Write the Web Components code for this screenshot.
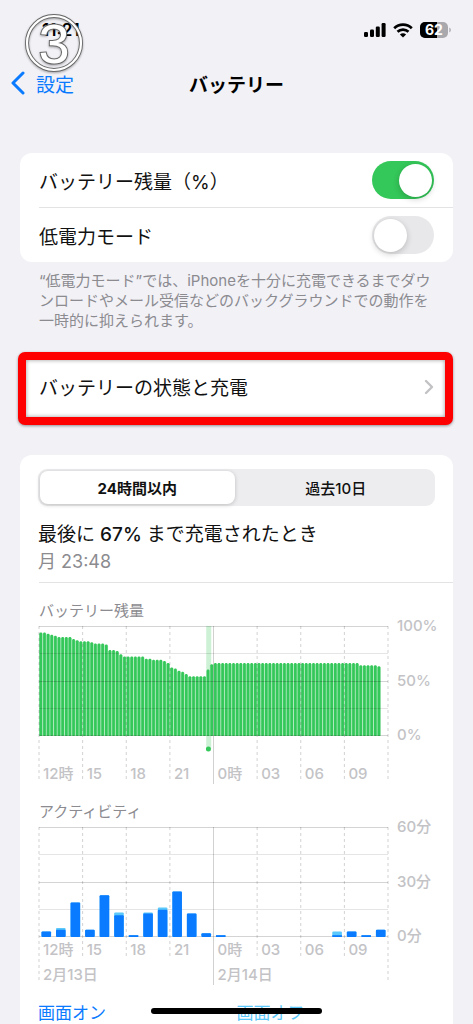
<!DOCTYPE html>
<html lang="ja">
<head>
<meta charset="utf-8">
<meta name="viewport" content="width=device-width, initial-scale=1">
<title>バッテリー</title>
<style>
  html, body { margin: 0; }
  body {
    background: #f2f1f6;
    color: #111;
    font-family: Inter, "Noto Sans CJK JP", sans-serif;
    font-size: 19px;
    --blue: #0a7aff;
    --green: #34c759;
    --gray: #8b8b90;
    --line: #e3e3e6;
  }
</style>
</head>
<body>
<battery-page></battery-page>

<script>
const define = (name, html, setup) => {
  const template = document.createElement('template');
  template.innerHTML = html;
  customElements.define(name, class extends HTMLElement {
    connectedCallback() {
      if (this.shadowRoot) return;
      this.attachShadow({ mode: 'open' }).append(template.content.cloneNode(true));
      if (setup) setup(this, this.shadowRoot);
    }
  });
};

define('status-bar', `
  <style>
    :host { display: flex; justify-content: space-between; align-items: center; height: 60px; padding: 0 21px 0 42px; box-sizing: border-box; }
    time { font-size: 17px; font-weight: 600; color: #000; }
    .icons { display: flex; align-items: center; gap: 7px; }
    svg { display: block; overflow: visible; }
    text { font: 700 14px Inter, sans-serif; fill: #fff; }
  </style>
  <time>11:21</time>
  <div class="icons">
    <svg width="22" height="14" viewBox="0 0 22 14" role="img" aria-label="電波">
      <rect x="0" y="9" width="4" height="5" rx="1.2"/><rect x="6" y="6.500" width="4" height="7.500" rx="1.2"/>
      <rect x="11.800" y="3.500" width="4" height="10.500" rx="1.2"/><rect x="17.600" y="0" width="4" height="14" rx="1.2"/>
    </svg>
    <svg width="20" height="15" viewBox="0 0 20 15" role="img" aria-label="Wi-Fi" fill="none" stroke="#000" stroke-width="2.700">
      <path d="M1.200 5.200C6.100.5 13.900.5 18.800 5.200M4.500 8.700c3.100-2.900 7.900-2.900 11 0"/>
      <path d="M6.900 11.400c1.800-1.500 4.400-1.500 6.200 0L10 14.600z" fill="#000" stroke="none"/>
    </svg>
    <svg width="32" height="16" viewBox="0 0 32 16">
      <defs><clipPath id="body"><rect width="28" height="16" rx="5"/></clipPath></defs>
      <g clip-path="url(#body)"><rect width="28" height="16" fill="#a9a9ad"/><rect width="17" height="16"/></g>
      <path d="M29.300 5.500c2 .8 2 4.200 0 5z" fill="#a9a9ad"/>
      <text x="14" y="13" text-anchor="middle">62</text>
    </svg>
  </div>`);

define('nav-bar', `
  <style>
    :host { display: grid; grid-template-columns: 1fr auto 1fr; align-items: center; height: 46px; padding: 0 10px; }
    a { display: flex; align-items: center; gap: 10px; color: var(--blue); text-decoration: none; }
    h1 { margin: 0; font-size: 19px; font-weight: 700; color: #000; }
  </style>
  <a href="#settings">
    <svg width="16" height="24" viewBox="0 0 16 24" fill="none" stroke="currentColor" stroke-width="3" stroke-linecap="round" stroke-linejoin="round"><path d="M13 2 3 12l10 10"/></svg>
    <span>設定</span>
  </a>
  <h1><slot></slot></h1>`);

define('step-badge', `
  <style>
    :host { position: absolute; left: 22px; top: 11px; width: 64px; height: 64px; filter: drop-shadow(0 1px 1px #0005); }
    svg { display: block; }
    text { font: 400 56px "Liberation Sans", sans-serif; fill: #fff; stroke: #666; stroke-width: 2px; paint-order: stroke; }
  </style>
  <svg width="64" height="64" viewBox="0 0 64 64">
    <circle cx="32" cy="32" r="27" fill="none" stroke="#666" stroke-width="4"/>
    <circle cx="32" cy="32" r="27" fill="none" stroke="#fff" stroke-width="2.200"/>
    <text x="32" y="52" text-anchor="middle">3</text>
  </svg>`);

define('settings-card', `
  <style>
    :host { display: block; background: #fff; border-radius: 12px; margin: 0 20px; }
  </style><slot></slot>`);

define('switch-row', `
  <style>
    :host { display: block; padding-left: 19px; }
    label { display: flex; align-items: center; justify-content: space-between; height: 54px; padding-right: 19px; }
    :host([divided]) label { border-bottom: 1px solid var(--line); }
    input { appearance: none; margin: 0; width: 62px; height: 38px; border-radius: 19px; background: #e8e8ea; display: flex; align-items: center; padding: 0 2px; box-sizing: border-box; }
    input::before { content: ""; width: 33px; height: 33px; border-radius: 50%; background: #fff; box-shadow: 0 2px 6px #0003; }
    input:checked { background: var(--green); justify-content: flex-end; }
  </style>
  <label><span><slot></slot></span><input type="checkbox" role="switch"></label>`,
  (host, root) => { root.querySelector('input').checked = host.hasAttribute('checked'); });

define('link-row', `
  <style>
    :host { display: block; margin: 0 20px 0 18px; }
    a { display: flex; align-items: center; justify-content: space-between; height: 53px; padding: 0 11px 4px 13px;
        border: 8px solid #f00; border-radius: 7px; background: #fff; color: inherit; text-decoration: none;
        box-shadow: 0 1px 3px #0006, inset 0 0 4px #0006; }
  </style>
  <a href="#health"><span><slot></slot></span>
    <svg width="10" height="16" viewBox="0 0 10 16" fill="none" stroke="#c2c2c5" stroke-width="2.400" stroke-linecap="round" stroke-linejoin="round"><path d="m2 2 6 6-6 6"/></svg>
  </a>`);

define('range-tabs', `
  <style>
    :host { display: grid; grid-template-columns: 1fr 1fr; gap: 4px; height: 37px; padding: 2px; box-sizing: border-box; background: #ededef; border-radius: 9px; }
    button { border: 0; background: none; border-radius: 8px; font: 500 15px Inter, "Noto Sans CJK JP", sans-serif; color: #111; padding: 0; }
    button[aria-pressed="true"] { background: #fff; font-weight: 700; box-shadow: 0 1px 4px #0003; }
  </style>
  <button type="button" aria-pressed="true">24時間以内</button>
  <button type="button" aria-pressed="false">過去10日</button>`);

const PLOT = 109;
const HOURS = ['12時', '15', '18', '21', '0時', '03', '06', '09'];
const repeat = (n, v) => Array(n).fill(v);
const LEVELS = [94, 94, 93, 92, 91, ...repeat(4, 90), 88, 87, 86, 86, 86, 85, 84, 84, 84, 83, 78, 78, 77, 74,
  ...repeat(6, 72), 70, 70, 69, 69, 69, 68, 66, 62, 61, 59, 58, 56, ...repeat(5, 54), 60, 65,
  ...repeat(40, 66), ...repeat(5, 64), 63];
/* hour slot, minutes with the screen on, minutes with the screen off */
const ACTIVITY = [[0, 3, 0], [1, 4, 1], [2, 19, 0], [3, 4, 0], [4, 23, 0], [5, 12, 1.5], [6, 1, 0], [7, 13, 0.500], [8, 15, 1.2],
  [9, 25, 0], [10, 13, 0], [11, 2, 0], [12, 1, 0], [20, 1, 2], [21, 3, 0], [22, 1, 0], [23, 4, 0]];

const gridLines = (dash, ends, solid) => {
  let out = '';
  for (let i = 0; i < 5; i++) {
    const y = Math.round(PLOT * i / 4) + 0.5;
    out += `<line x1="0" x2="100%" y1="${y}" y2="${y}" stroke="#000" stroke-opacity="${i % 2 ? .1 : .17}"/>`;
  }
  for (let i = 0; i < 9; i++) {
    const end = i === 4 ? solid : (i % 8 ? dash : ends);
    out += `<line x1="${i * 12.5}%" x2="${i * 12.5}%" y1="0" y2="${end}" stroke="#000" stroke-opacity=".18" ${i === 4 ? '' : 'stroke-dasharray="3 3"'}/>`;
  }
  return out;
};

const batteryBars = () => {
  const slot = 100 / 96;
  let out = `<rect x="${46 * slot}%" width="5" y="0" height="123" fill="#34c759" fill-opacity=".25"/>`;
  LEVELS.forEach((v, i) => {
    const h = PLOT * v / 100;
    out += `<rect x="${i * slot}%" width="${slot}%" y="${PLOT - h + 1}" height="${h}" fill="#98e2aa"/>
      <rect x="${(i + .15) * slot}%" width="${slot * .72}%" y="${PLOT - h}" height="${h + 1}" rx="1" fill="#34c759"/>`;
  });
  return out + `<circle cx="${46.6 * slot}%" cy="123" r="2.500" fill="#34c759"/>`;
};

const activityBars = () => ACTIVITY.map(([hour, on, off]) => {
  const x = (hour + .17) * 100 / 24, w = 66 / 24;
  const a = PLOT * on / 60, b = PLOT * off / 60;
  return `<rect x="${x}%" width="${w}%" y="${PLOT - a - b + 1}" height="${a + b}" rx="1" fill="#5ac8fa"/>
    <rect x="${x}%" width="${w}%" y="${PLOT - a + 1}" height="${a}" rx="${a > 3 ? 1 : 0}" fill="#0a7aff"/>`;
}).join('');

define('usage-chart', `
  <style>
    :host { display: block; font-size: 15px; line-height: 20px; }
    h3 { margin: 0 0 5px; font-size: 15px; font-weight: 400; color: var(--gray); }
    .chart { display: grid; grid-template-columns: 1fr 48px; color: #c3c3c6; font-weight: 500; }
    svg { grid-area: 1 / 1; display: block; width: 100%; overflow: visible; }
    .below { grid-area: 1 / 1; align-self: end; display: grid; grid-template-columns: repeat(8, 1fr); row-gap: 5px; }
    .below span { padding-left: 4px; white-space: nowrap; }
    .below .date { grid-column: span 4; }
    .scale { grid-area: 1 / 2; display: flex; flex-direction: column; justify-content: space-between; height: 129px; margin-top: -10px; padding-left: 9px; }
  </style>
  <h3></h3>
  <div class="chart"><div class="below"></div><div class="scale"></div></div>`,
  (host, root) => {
    const battery = host.getAttribute('kind') === 'battery';
    root.querySelector('h3').textContent = host.getAttribute('heading');
    root.querySelector('.chart').insertAdjacentHTML('afterbegin', battery
      ? `<svg height="158">${batteryBars()}${gridLines(156, 156, 158)}</svg>`
      : `<svg height="158">${gridLines(132, 156, 158)}${activityBars()}</svg>`);
    root.querySelector('.below').innerHTML = HOURS.map(t => `<span>${t}</span>`).join('')
      + (battery ? '' : '<span class="date">2月13日</span><span class="date">2月14日</span>');
    root.querySelector('.scale').innerHTML = (battery ? ['100%', '50%', '0%'] : ['60分', '30分', '0分'])
      .map(t => `<span>${t}</span>`).join('');
  });

define('home-indicator', `
  <style>
    :host { position: fixed; bottom: 10px; left: 50%; width: 36%; height: 6px; margin-left: -18%; border-radius: 3px; background: #000; }
  </style>`);

define('battery-page', `
  <style>
    :host { display: flex; flex-direction: column; min-height: 100vh; }
    p { margin: 0; }
    nav-bar { margin-bottom: 47px; }
    .note { margin: 9px 20px 21px 39px; font-size: 15px; line-height: 20px; color: var(--gray); white-space: nowrap; }
    .usage { flex: 1; margin-top: 30px; border-radius: 12px 12px 0 0; }
    .summary { padding: 14px 18px 7px; }
    h2 { margin: 16px 0 0; font-size: 19px; line-height: 26px; font-weight: 400; }
    h2 b { font-weight: 500; }
    .when { font-size: 18px; line-height: 27px; color: var(--gray); }
    .charts { margin-left: 19px; padding: 18px 17px 0 0; border-top: 1px solid var(--line); display: grid; gap: 18px; }
    .legend { display: grid; grid-template-columns: 1fr 1fr; margin: 17px 18px 0; font-size: 17px; line-height: 22px; color: var(--blue); }
    .off { color: #5ac8fa; }
  </style>
  <status-bar></status-bar>
  <nav-bar>バッテリー</nav-bar>
  <settings-card>
    <switch-row divided checked>バッテリー残量（%）</switch-row>
    <switch-row>低電力モード</switch-row>
  </settings-card>
  <p class="note">“低電力モード”では、iPhoneを十分に充電できるまでダウ<br>ンロードやメール受信などのバックグラウンドでの動作を<br>一時的に抑えられます。</p>
  <link-row>バッテリーの状態と充電</link-row>
  <settings-card class="usage">
    <div class="summary">
      <range-tabs></range-tabs>
      <h2>最後に<b> 67% </b>まで充電されたとき</h2>
      <p class="when">月 23:48</p>
    </div>
    <div class="charts">
      <usage-chart kind="battery" heading="バッテリー残量"></usage-chart>
      <usage-chart kind="activity" heading="アクティビティ"></usage-chart>
    </div>
    <div class="legend"><span>画面オン</span><span class="off">画面オフ</span></div>
  </settings-card>
  <step-badge></step-badge>
  <home-indicator></home-indicator>`);
</script>
</body>
</html>
